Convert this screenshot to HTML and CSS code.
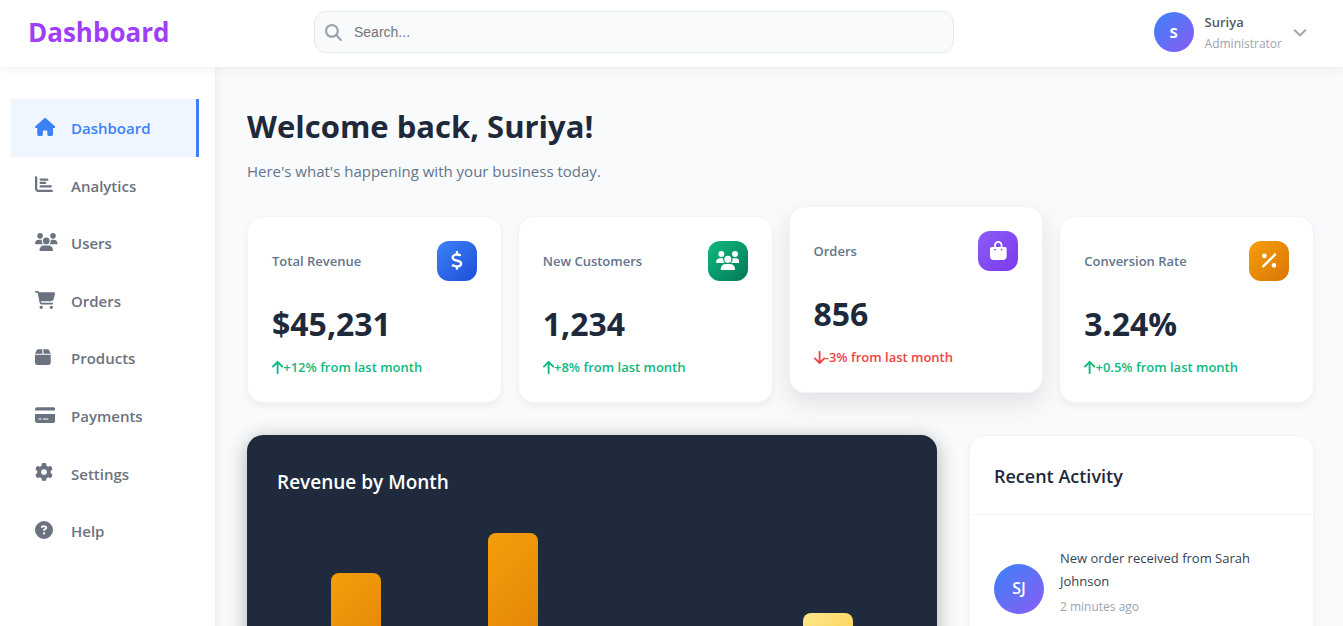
FILE: index.html
```html
<!DOCTYPE html>
<html lang="en">
<head>
<meta charset="utf-8">
<meta name="viewport" content="width=device-width, initial-scale=1">
<title>Dashboard</title>
<link rel="stylesheet" href="styles.css">
</head>
<body>
<svg class="sprite" aria-hidden="true">
  <defs>
    <path id="i-search" d="M416 208c0 45.9-14.9 88.3-40 122.7L502.6 457.4c12.5 12.5 12.5 32.8 0 45.3s-32.8 12.5-45.3 0L330.7 376c-34.4 25.2-76.8 40-122.7 40C93.1 416 0 322.9 0 208S93.1 0 208 0S416 93.1 416 208zM208 352a144 144 0 1 0 0-288 144 144 0 1 0 0 288z"/>
    <path id="i-home" d="M575.8 255.5c0 18-15 32.1-32 32.1h-32l.7 160.2c0 2.7-.2 5.4-.5 8.1V472c0 22.1-17.9 40-40 40H456c-1.1 0-2.2 0-3.3-.1c-1.4 .1-2.8 .1-4.2 .1H416 392c-22.1 0-40-17.9-40-40V448 384c0-17.7-14.3-32-32-32H256c-17.7 0-32 14.3-32 32v64 24c0 22.1-17.9 40-40 40H160 128.1c-1.5 0-3-.1-4.5-.2c-1.2 .1-2.4 .2-3.6 .2H104c-22.1 0-40-17.9-40-40V360c0-.9 0-1.9 .1-2.8V287.6H32c-18 0-32-14-32-32.1c0-9 3-17 10-24L266.4 8c7-7 15-8 22-8s15 2 21 7L564.8 231.5c8 7 12 15 11 24z"/>
    <path id="i-chart" d="M32 32c17.7 0 32 14.3 32 32V400c0 8.8 7.2 16 16 16H480c17.7 0 32 14.3 32 32s-14.3 32-32 32H80c-44.2 0-80-35.8-80-80V64C0 46.3 14.3 32 32 32zm96 96c0-17.7 14.3-32 32-32l192 0c17.7 0 32 14.3 32 32s-14.3 32-32 32H160c-17.7 0-32-14.3-32-32zm32 64H288c17.7 0 32 14.3 32 32s-14.3 32-32 32H160c-17.7 0-32-14.3-32-32s14.3-32 32-32zm0 96H448c17.7 0 32 14.3 32 32s-14.3 32-32 32H160c-17.7 0-32-14.3-32-32s14.3-32 32-32z"/>
    <path id="i-users" d="M144 0a80 80 0 1 1 0 160A80 80 0 1 1 144 0zM512 0a80 80 0 1 1 0 160A80 80 0 1 1 512 0zM0 298.7C0 239.8 47.8 192 106.7 192h42.7c15.9 0 31 3.5 44.6 9.7c-1.3 7.2-1.9 14.7-1.9 22.3c0 38.2 16.8 72.5 43.3 96c-.2 0-.4 0-.7 0H21.3C9.6 320 0 310.4 0 298.7zM405.3 320c-.2 0-.4 0-.7 0c26.6-23.5 43.3-57.8 43.3-96c0-7.6-.7-15-1.9-22.3c13.6-6.3 28.7-9.7 44.6-9.7h42.7C592.2 192 640 239.8 640 298.7c0 11.8-9.6 21.3-21.3 21.3H405.3zM224 224a96 96 0 1 1 192 0 96 96 0 1 1-192 0zM128 485.3C128 411.7 187.7 352 261.3 352H378.7C452.3 352 512 411.7 512 485.3c0 14.7-11.9 26.7-26.7 26.7H154.7c-14.7 0-26.7-11.9-26.7-26.7z"/>
    <path id="i-cart" d="M0 24C0 10.7 10.7 0 24 0H69.5c22 0 41.5 12.8 50.6 32h411c26.3 0 45.5 25 38.6 50.4l-41 152.3c-8.5 31.4-37 53.3-69.5 53.3H170.7l5.4 28.5c2.2 11.3 12.1 19.5 23.6 19.5H488c13.3 0 24 10.7 24 24s-10.7 24-24 24H199.7c-34.6 0-64.3-24.6-70.7-58.5L77.4 54.5c-.7-3.8-4-6.5-7.9-6.5H24C10.7 48 0 37.3 0 24zM128 464a48 48 0 1 1 96 0 48 48 0 1 1-96 0zm336-48a48 48 0 1 1 0 96 48 48 0 1 1 0-96z"/>
    <path id="i-box" d="M50.7 58.5L0 160H208V32H93.7C75.5 32 58.9 42.3 50.7 58.5zM240 160H448L397.3 58.5C389.1 42.3 372.5 32 354.3 32H240V160zm208 32H0V416c0 35.3 28.7 64 64 64H384c35.3 0 64-28.7 64-64V192z"/>
    <path id="i-card" d="M64 32C28.7 32 0 60.7 0 96v32H576V96c0-35.3-28.7-64-64-64H64zM576 224H0V416c0 35.3 28.7 64 64 64H512c35.3 0 64-28.7 64-64V224zM112 352h64c8.8 0 16 7.2 16 16s-7.2 16-16 16H112c-8.8 0-16-7.2-16-16s7.2-16 16-16zm112 16c0-8.8 7.2-16 16-16H368c8.8 0 16 7.2 16 16s-7.2 16-16 16H240c-8.8 0-16-7.2-16-16z"/>
    <path id="i-gear" d="M495.9 166.6c3.2 8.7 .5 18.4-6.4 24.6l-43.3 39.4c1.1 8.3 1.7 16.8 1.7 25.4s-.6 17.1-1.7 25.4l43.3 39.4c6.9 6.2 9.6 15.9 6.4 24.6c-4.4 11.9-9.7 23.3-15.8 34.3l-4.7 8.1c-6.6 11-14 21.4-22.1 31.2c-5.9 7.2-15.7 9.6-24.5 6.8l-55.7-17.7c-13.4 10.3-28.2 18.9-44 25.4l-12.5 57.1c-2 9.1-9 16.3-18.2 17.8c-13.8 2.3-28 3.5-42.5 3.5s-28.7-1.2-42.5-3.5c-9.2-1.5-16.2-8.7-18.2-17.8l-12.5-57.1c-15.8-6.5-30.6-15.1-44-25.4L83.1 425.9c-8.8 2.8-18.6 .3-24.5-6.8c-8.1-9.8-15.5-20.2-22.1-31.2l-4.7-8.1c-6.1-11-11.4-22.4-15.8-34.3c-3.2-8.7-.5-18.4 6.4-24.6l43.3-39.4C64.6 273.1 64 264.6 64 256s.6-17.1 1.7-25.4L22.4 191.2c-6.9-6.2-9.6-15.9-6.4-24.6c4.4-11.9 9.7-23.3 15.8-34.3l4.7-8.1c6.6-11 14-21.4 22.1-31.2c5.9-7.2 15.7-9.6 24.5-6.8l55.7 17.7c13.4-10.3 28.2-18.9 44-25.4l12.5-57.1c2-9.1 9-16.3 18.2-17.8C227.3 1.2 241.5 0 256 0s28.7 1.2 42.5 3.5c9.2 1.5 16.2 8.7 18.2 17.8l12.5 57.1c15.8 6.5 30.6 15.1 44 25.4l55.7-17.7c8.8-2.8 18.6-.3 24.5 6.8c8.1 9.8 15.5 20.2 22.1 31.2l4.7 8.1c6.1 11 11.4 22.4 15.8 34.3zM256 336a80 80 0 1 0 0-160 80 80 0 1 0 0 160z"/>
    <path id="i-help" d="M256 512A256 256 0 1 0 256 0a256 256 0 1 0 0 512zM169.8 165.3c7.9-22.3 29.1-37.3 52.8-37.3h58.3c34.9 0 63.1 28.3 63.1 63.1c0 22.6-12.1 43.5-31.7 54.8L280 264.4c-.2 13-10.9 23.6-24 23.6c-13.3 0-24-10.7-24-24V250.5c0-8.6 4.6-16.5 12.1-20.8l44.3-25.4c4.7-2.7 7.6-7.7 7.6-13.1c0-8.4-6.8-15.1-15.1-15.1H222.6c-3.4 0-6.4 2.1-7.5 5.3l-.4 1.2c-4.4 12.5-18.2 19-30.6 14.6s-19-18.2-14.6-30.6l.4-1.2zM224 352a32 32 0 1 1 64 0 32 32 0 1 1-64 0z"/>
    <path id="i-dollar" d="M160 0c17.7 0 32 14.3 32 32V67.7c1.6 .2 3.1 .4 4.7 .7c.4 .1 .7 .1 1.1 .2l48 8.8c17.4 3.2 28.9 19.9 25.7 37.2s-19.9 28.9-37.2 25.7l-47.5-8.7c-31.3-4.6-58.9-1.5-78.3 6.2s-27.2 18.3-29 28.1c-2 10.7-.5 16.7 1.2 20.4c1.8 3.9 5.5 8.3 12.8 13.2c16.3 10.7 41.3 17.7 73.7 26.3l2.9 .8c28.6 7.6 63.6 16.8 89.6 33.8c14.2 9.3 27.6 21.9 35.9 39.5c8.5 17.9 10.3 37.9 6.4 59.2c-6.9 38-33.1 63.4-65.6 76.7c-13.7 5.6-28.6 9.2-44.4 11V480c0 17.7-14.3 32-32 32s-32-14.3-32-32V445.1c-.4-.1-.9-.1-1.3-.2l-.2 0c-24.4-3.8-64.5-14.3-91.5-26.3c-16.1-7.2-23.4-26.1-16.2-42.2s26.1-23.4 42.2-16.2c20.9 9.3 55.3 18.5 75.2 21.6c31.9 4.7 58.2 2 76-5.3c16.9-6.9 24.6-16.9 26.8-28.9c1.9-10.6 .4-16.7-1.3-20.4c-1.9-4-5.6-8.4-13-13.3c-16.4-10.7-41.5-17.7-74-26.3l-2.8-.7C119.4 279.3 84.4 270 58.4 253c-14.2-9.3-27.5-22-35.8-39.6c-8.4-17.9-10.1-37.9-6.1-59.2C23.7 116 52.3 91.2 84.8 78.3c13.3-5.3 27.9-8.9 43.2-11V32c0-17.7 14.3-32 32-32z"/>
    <path id="i-bag" d="M160 112c0-35.3 28.7-64 64-64s64 28.7 64 64v48H160V112zm-48 48H48c-26.5 0-48 21.5-48 48V416c0 53 43 96 96 96H352c53 0 96-43 96-96V208c0-26.5-21.5-48-48-48H336V112C336 50.1 285.9 0 224 0S112 50.1 112 112v48zm24 48a24 24 0 1 1 0 48 24 24 0 1 1 0-48zm152 24a24 24 0 1 1 48 0 24 24 0 1 1-48 0z"/>
    <path id="i-percent" d="M374.6 118.6c12.5-12.5 12.5-32.8 0-45.3s-32.8-12.5-45.3 0l-320 320c-12.5 12.5-12.5 32.8 0 45.3s32.8 12.5 45.3 0l320-320zM128 128A64 64 0 1 0 0 128a64 64 0 1 0 128 0zM384 384a64 64 0 1 0-128 0 64 64 0 1 0 128 0z"/>
    <path id="i-up" d="M214.6 41.4c-12.5-12.5-32.8-12.5-45.3 0l-160 160c-12.5 12.5-12.5 32.8 0 45.3s32.8 12.5 45.3 0L160 141.2V448c0 17.7 14.3 32 32 32s32-14.3 32-32V141.2L329.4 246.6c12.5 12.5 32.8 12.5 45.3 0s12.5-32.8 0-45.3l-160-160z"/>
    <path id="i-down" d="M169.4 470.6c12.5 12.5 32.8 12.5 45.3 0l160-160c12.5-12.5 12.5-32.8 0-45.3s-32.8-12.5-45.3 0L224 370.8V64c0-17.7-14.3-32-32-32s-32 14.3-32 32v306.7L54.6 265.4c-12.5-12.5-32.8-12.5-45.3 0s-12.5 32.8 0 45.3l160 160z"/>
    <path id="i-chevron" d="M233.4 406.6c12.5 12.5 32.8 12.5 45.3 0l192-192c12.5-12.5 12.5-32.8 0-45.3s-32.8-12.5-45.3 0L256 338.7 86.6 169.4c-12.5-12.5-32.8-12.5-45.3 0s-12.5 32.8 0 45.3l192 192z"/>
  </defs>
</svg>

<header class="topbar">
  <div class="brand">Dashboard</div>
  <label class="search">
    <svg class="search-icon" viewBox="0 0 512 512" aria-hidden="true"><use href="#i-search"/></svg>
    <input class="search-input" type="search" placeholder="Search..." aria-label="Search">
  </label>
  <button class="profile" type="button">
    <span class="avatar">S</span>
    <span class="profile-text">
      <span class="profile-name">Suriya</span>
      <span class="profile-role">Administrator</span>
    </span>
    <svg class="chevron" viewBox="0 0 512 512" aria-hidden="true"><use href="#i-chevron"/></svg>
  </button>
</header>

<div class="layout">
  <nav class="sidebar" aria-label="Main">
    <a class="nav-link active" href="#dashboard"><span class="nav-icon"><svg viewBox="0 0 576 512"><use href="#i-home"/></svg></span>Dashboard</a>
    <a class="nav-link" href="#analytics"><span class="nav-icon"><svg viewBox="0 0 512 512"><use href="#i-chart"/></svg></span>Analytics</a>
    <a class="nav-link" href="#users"><span class="nav-icon"><svg viewBox="0 0 640 512"><use href="#i-users"/></svg></span>Users</a>
    <a class="nav-link" href="#orders"><span class="nav-icon"><svg viewBox="0 0 576 512"><use href="#i-cart"/></svg></span>Orders</a>
    <a class="nav-link" href="#products"><span class="nav-icon"><svg viewBox="0 0 448 512"><use href="#i-box"/></svg></span>Products</a>
    <a class="nav-link" href="#payments"><span class="nav-icon"><svg viewBox="0 0 576 512"><use href="#i-card"/></svg></span>Payments</a>
    <a class="nav-link" href="#settings"><span class="nav-icon"><svg viewBox="0 0 512 512"><use href="#i-gear"/></svg></span>Settings</a>
    <a class="nav-link" href="#help"><span class="nav-icon"><svg viewBox="0 0 512 512"><use href="#i-help"/></svg></span>Help</a>
  </nav>

  <main class="content">
    <h1 class="welcome">Welcome back, Suriya!</h1>
    <p class="subtitle">Here's what's happening with your business today.</p>

    <section class="stats" aria-label="Key figures">
      <article class="stat">
        <div class="stat-head"><h2 class="stat-label">Total Revenue</h2><span class="stat-icon blue"><svg viewBox="0 0 320 512"><use href="#i-dollar"/></svg></span></div>
        <div class="stat-value">$45,231</div>
        <div class="stat-change"><svg viewBox="0 0 384 512"><use href="#i-up"/></svg>+12% from last month</div>
      </article>
      <article class="stat">
        <div class="stat-head"><h2 class="stat-label">New Customers</h2><span class="stat-icon green"><svg viewBox="0 0 640 512"><use href="#i-users"/></svg></span></div>
        <div class="stat-value">1,234</div>
        <div class="stat-change"><svg viewBox="0 0 384 512"><use href="#i-up"/></svg>+8% from last month</div>
      </article>
      <article class="stat raised">
        <div class="stat-head"><h2 class="stat-label">Orders</h2><span class="stat-icon purple"><svg viewBox="0 0 448 512"><use href="#i-bag"/></svg></span></div>
        <div class="stat-value">856</div>
        <div class="stat-change negative"><svg viewBox="0 0 384 512"><use href="#i-down"/></svg>-3% from last month</div>
      </article>
      <article class="stat">
        <div class="stat-head"><h2 class="stat-label">Conversion Rate</h2><span class="stat-icon orange"><svg viewBox="0 0 384 512"><use href="#i-percent"/></svg></span></div>
        <div class="stat-value">3.24%</div>
        <div class="stat-change"><svg viewBox="0 0 384 512"><use href="#i-up"/></svg>+0.5% from last month</div>
      </article>
    </section>

    <div class="panels">
      <section class="chart">
        <h2 class="chart-title">Revenue by Month</h2>
        <div class="bars">
          <div class="bar" style="height: 80%"></div>
          <div class="bar" style="height: 100%"></div>
          <div class="bar light" style="height: 40%"></div>
          <div class="bar light" style="height: 60%"></div>
        </div>
      </section>
      <section class="activity">
        <h2 class="activity-title">Recent Activity</h2>
        <div class="activity-item">
          <span class="avatar large">SJ</span>
          <div class="activity-text">
            <p class="activity-message">New order received from Sarah Johnson</p>
            <time class="activity-time">2 minutes ago</time>
          </div>
        </div>
      </section>
    </div>
  </main>
</div>
</body>
</html>
```

FILE: styles.css
```css
* {
  box-sizing: border-box;
  margin: 0;
  padding: 0;
}

body {
  min-height: 100vh;
  display: flex;
  flex-direction: column;
  background: #f9fafc;
  color: #1e293b;
  font-family: "Segoe UI", "Open Sans", "Noto Sans", sans-serif;
  font-size: 15px;
  line-height: 1.6;
}

svg {
  display: block;
  fill: currentColor;
}

.sprite {
  position: absolute;
  width: 0;
  height: 0;
}

/* Top bar */
.topbar {
  position: sticky;
  top: 0;
  z-index: 2;
  display: flex;
  align-items: center;
  height: 67px;
  padding: 0 36px 3px 28px;
  background: #fff;
  box-shadow: 0 2px 10px rgba(0, 0, 0, 0.06);
}

.brand {
  flex: 0 0 286px;
  padding-top: 2px;
  color: #9f3ff5;
  font-size: 26px;
  font-weight: 700;
}

.search {
  flex: 0 1 640px;
  display: flex;
  align-items: center;
  gap: 12px;
  height: 42px;
  padding: 0 12px 0 10px;
  border: 1px solid #e2e8f0;
  border-radius: 12px;
  background: #f8fafc;
}

.search-icon {
  height: 17px;
  color: #9ca3af;
}

.search-input {
  flex: 1;
  min-width: 0;
  border: 0;
  outline: 0;
  background: none;
  font: 14px "Liberation Sans", Arial, sans-serif;
}

.search-input::placeholder {
  color: #757575;
}

.profile {
  display: flex;
  align-items: center;
  gap: 11px;
  margin-left: auto;
  border: 0;
  background: none;
  font: inherit;
  text-align: left;
}

.avatar {
  flex: none;
  display: grid;
  place-items: center;
  width: 40px;
  height: 40px;
  border-radius: 50%;
  background: linear-gradient(135deg, #3b82f6, #8b5cf6);
  color: #fff;
  font-size: 15px;
  font-weight: 700;
}

.avatar.large {
  width: 50px;
  height: 50px;
  font-size: 16px;
  font-weight: 600;
}

.profile-text {
  display: flex;
  flex-direction: column;
  padding-top: 2px;
  line-height: 21px;
}

.profile-name {
  color: #555962;
  font-size: 13px;
  font-weight: 600;
}

.profile-role {
  color: #9ca3af;
  font-size: 12px;
}

.chevron {
  height: 14px;
  color: #9ca3af;
  stroke: currentColor;
  stroke-width: 16px;
}

/* Page body */
.layout {
  flex: 1;
  display: flex;
}

.sidebar {
  flex: 0 0 215px;
  padding: 32px 16px 32px 11px;
  background: #fff;
  box-shadow: 2px 0 10px rgba(0, 0, 0, 0.06);
}

.nav-link {
  display: flex;
  align-items: center;
  gap: 12px;
  padding: 17px 24px 15px;
  border-right: 3px solid transparent;
  color: #6b7280;
  font-weight: 600;
  line-height: 1.6rem;
  text-decoration: none;
}

.nav-link.active {
  border-right-color: #3b82f6;
  background: #eff6ff;
  color: #3b82f6;
}

.nav-icon {
  width: 24px;
  padding-bottom: 4px;
}

.nav-icon svg {
  height: 18px;
}

.content {
  flex: 1;
  min-width: 0;
  padding: 32px 29px 32px 32px;
}

.welcome {
  font-size: 31px;
  font-weight: 700;
  line-height: 54px;
}

.subtitle {
  margin-top: 6px;
  margin-bottom: 32px;
  color: #64748b;
  line-height: 25px;
}

/* Stat cards */
.stats {
  display: grid;
  grid-template-columns: repeat(4, 1fr);
  gap: 16px;
}

.stat {
  padding: 24px;
  border: 1px solid #f1f5f9;
  border-radius: 16px;
  background: #fff;
  box-shadow: 0 4px 6px rgba(0, 0, 0, 0.05);
}

.stat.raised {
  transform: translateY(-10px);
  box-shadow: 0 10px 25px rgba(0, 0, 0, 0.1);
}

.stat-head {
  display: flex;
  align-items: center;
  justify-content: space-between;
  margin-bottom: 17px;
}

.stat-label {
  color: #64748b;
  font-size: 13px;
  font-weight: 600;
}

.stat-icon {
  display: grid;
  place-items: center;
  width: 40px;
  height: 40px;
  padding-bottom: 2px;
  border-radius: 12px;
  color: #fff;
}

.stat-icon svg {
  height: 19px;
}

.blue {
  background: linear-gradient(135deg, #3b82f6, #1d4ed8);
}

.green {
  background: linear-gradient(135deg, #10b981, #047857);
}

.purple {
  background: linear-gradient(135deg, #8b5cf6, #7c3aed);
}

.orange {
  background: linear-gradient(135deg, #f59e0b, #d97706);
}

.stat-value {
  margin-bottom: 6px;
  font-size: 32px;
  font-weight: 700;
  line-height: 52px;
}

.stat-change {
  display: flex;
  align-items: center;
  color: #10b981;
  font-size: 13px;
  font-weight: 600;
  line-height: 22px;
}

.stat-change svg {
  height: 15px;
}

.stat-change.negative {
  color: #ef4444;
}

/* Lower panels */
.panels {
  display: grid;
  grid-template-columns: 2fr 1fr;
  gap: 32px;
  margin-top: 32px;
}

.chart {
  padding: 30px;
  border-radius: 16px;
  background: #1f2a3c;
  box-shadow: 0 4px 20px rgba(0, 0, 0, 0.3);
}

.chart-title {
  margin-bottom: 34px;
  color: #fff;
  font-size: 19px;
  font-weight: 600;
  line-height: 34px;
}

.bars {
  display: flex;
  align-items: flex-end;
  justify-content: space-around;
  height: 200px;
}

.bar {
  width: 50px;
  border-radius: 8px 8px 0 0;
  background: linear-gradient(135deg, #f59e0b, #d97706);
}

.bar.light {
  background: linear-gradient(135deg, #fde68a, #fbbf24);
}

.activity {
  border: 1px solid #f1f5f9;
  border-radius: 16px;
  background: #fff;
  box-shadow: 0 4px 6px rgba(0, 0, 0, 0.05);
}

.activity-title {
  padding: 26px 24px 23px;
  border-bottom: 1px solid #f1f5f9;
  font-size: 18px;
  font-weight: 600;
  line-height: 29px;
}

.activity-item {
  display: flex;
  align-items: center;
  gap: 16px;
  padding: 32px 24px;
}

.activity-text {
  padding-bottom: 13px;
}

.activity-message {
  margin-bottom: 3px;
  color: #374151;
  font-size: 13px;
  line-height: 23px;
}

.activity-time {
  display: block;
  color: #9ca3af;
  font-size: 12px;
  line-height: 21px;
}
```
